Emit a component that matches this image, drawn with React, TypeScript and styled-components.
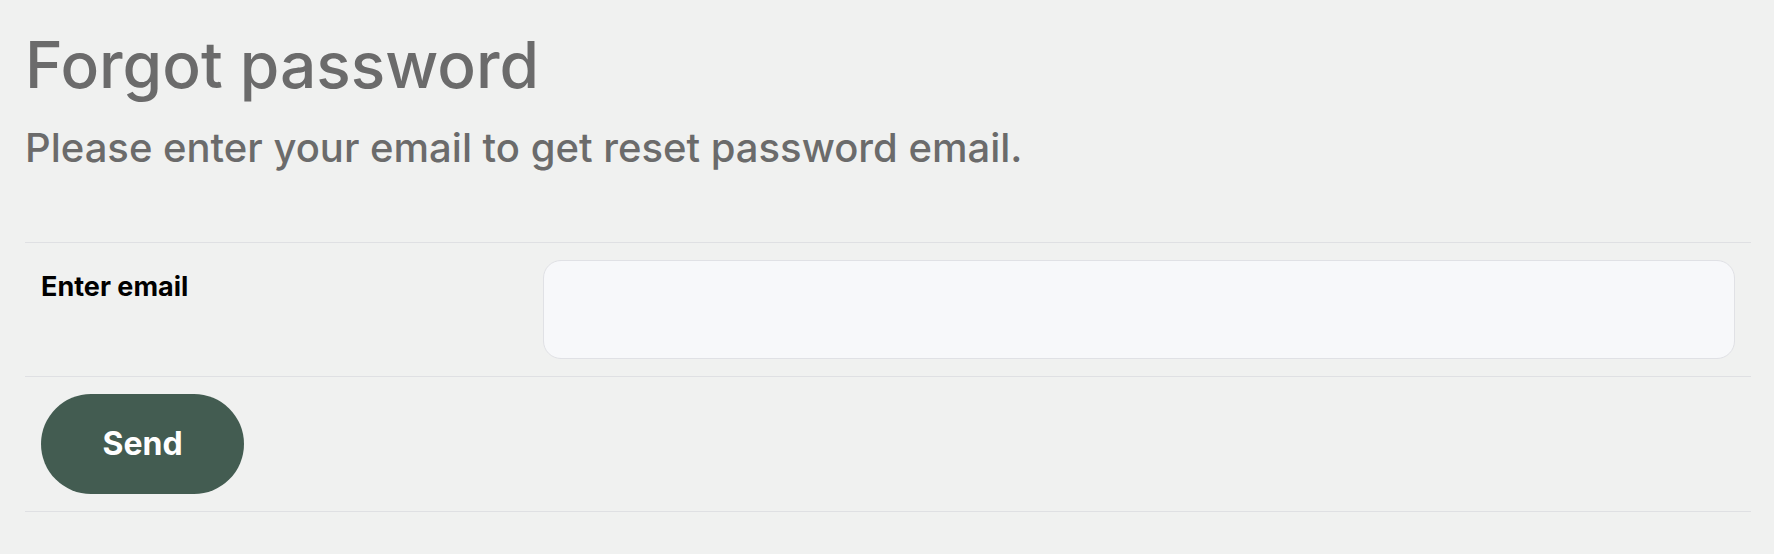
import styled, { createGlobalStyle } from 'styled-components';

const GlobalStyle = createGlobalStyle`
    html, body {
        margin: 0;
        padding: 0;
        background: #f0f1f0;
    }

    body {
        font-family: Inter, "Noto Sans", sans-serif;
    }
`;

const Page = styled.div`
    padding: 27px 23px 40px 25px;
`;

const Title = styled.h1`
    margin: 0;
    font-size: 64px;
    font-weight: 500;
    line-height: 1.2;
    color: #6b6b6b;
`;

const Subtitle = styled.p`
    margin: 20px 0 0;
    font-size: 40px;
    font-weight: 500;
    line-height: 1.2;
    color: #6b6b6b;
`;

const Form = styled.form`
    margin-top: 70px;
    border-top: 1px solid #dfe0e3;
`;

const Row = styled.div<{ $columns?: boolean }>`
    display: ${({ $columns }) => ($columns ? 'grid' : 'flex')};
    grid-template-columns: 502px 1fr;
    align-items: start;
    padding: 17px 16px;
    border-bottom: 1px solid #dfe0e3;
`;

const Label = styled.label`
    padding-top: 11px;
    font-size: 27px;
    font-weight: 700;
    line-height: 1.2;
    color: #000;
`;

const Input = styled.input`
    box-sizing: border-box;
    width: 100%;
    height: 99px;
    padding: 0 24px;
    border: 1px solid #e0e1e5;
    border-radius: 18px;
    background: #f7f8fa;
    font-family: inherit;
    font-size: 24px;
    outline: none;
`;

const SendButton = styled.button`
    width: 203px;
    height: 100px;
    border: none;
    border-radius: 50px;
    background: #435c51;
    color: #fff;
    font-family: inherit;
    font-size: 32px;
    font-weight: 700;
    cursor: pointer;
`;

export default function App() {
    return (
        <>
            <GlobalStyle />
            <Page>
                <Title>Forgot password</Title>
                <Subtitle>Please enter your email to get reset password email.</Subtitle>
                <Form onSubmit={e => e.preventDefault()}>
                    <Row $columns>
                        <Label htmlFor="email">Enter email</Label>
                        <Input id="email" type="email" />
                    </Row>
                    <Row>
                        <SendButton type="submit">Send</SendButton>
                    </Row>
                </Form>
            </Page>
        </>
    );
}
